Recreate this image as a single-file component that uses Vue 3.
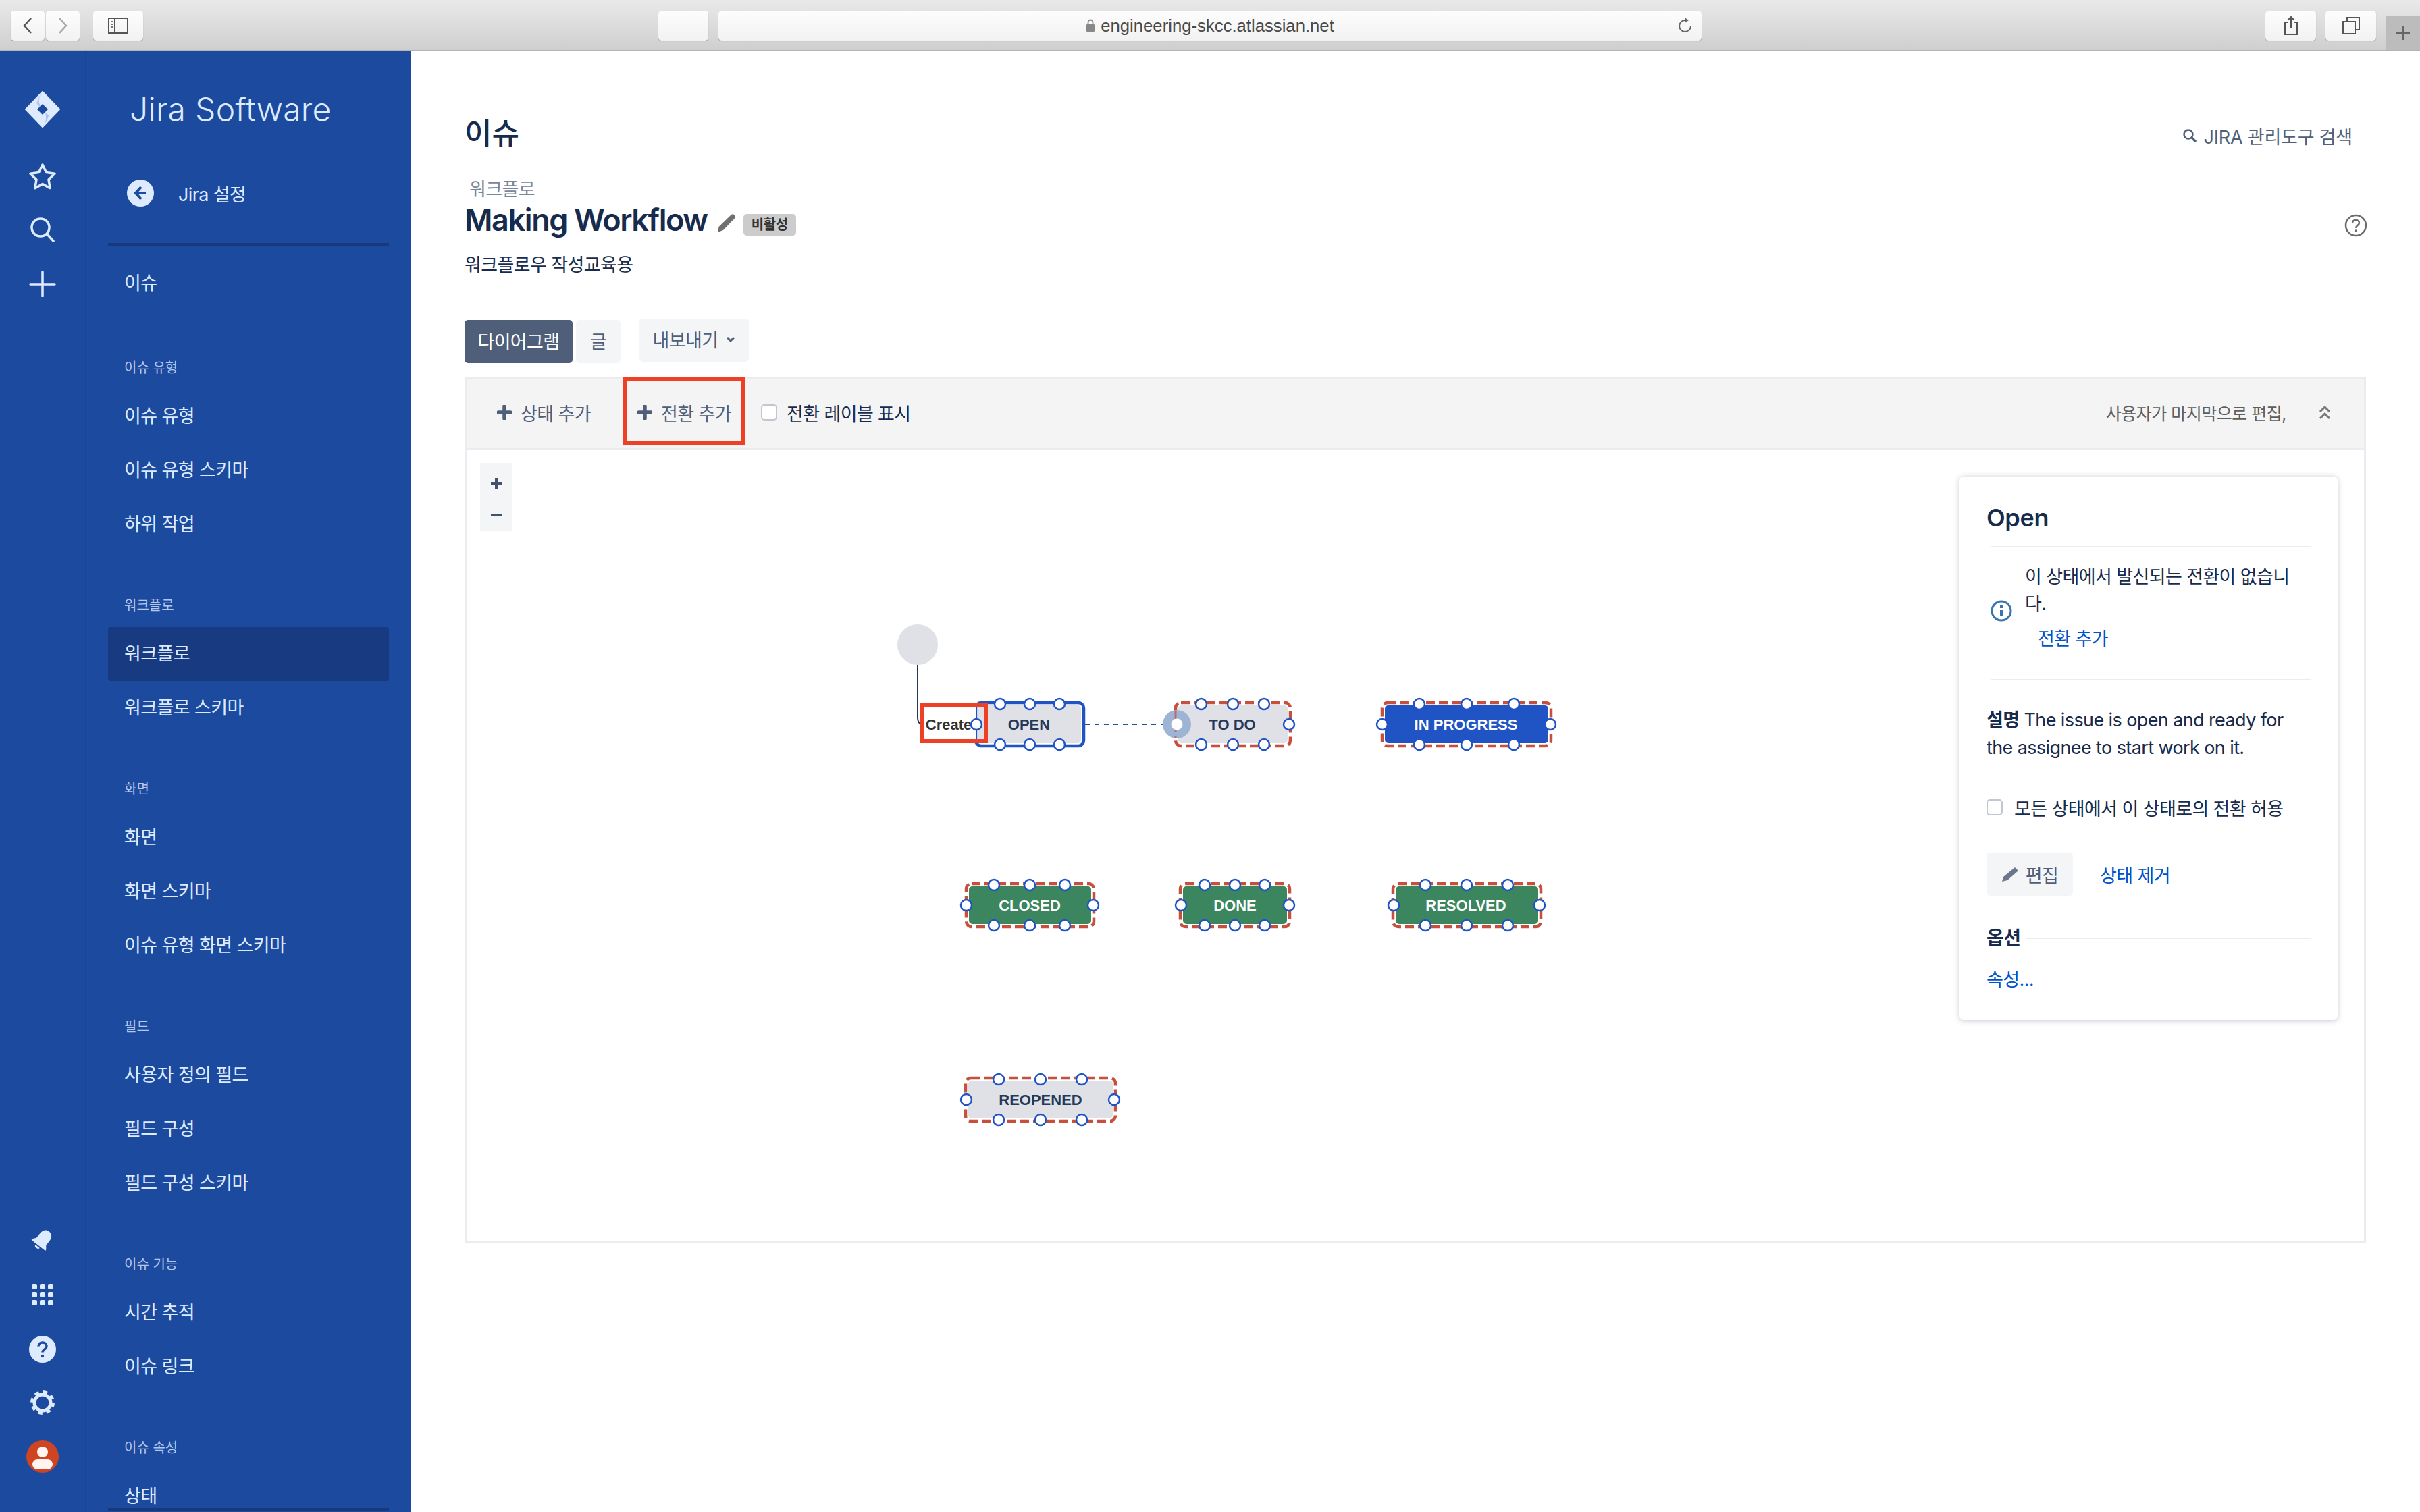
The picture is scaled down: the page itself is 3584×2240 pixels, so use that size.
<script setup>
const groups = [
  { title: '이슈 유형', items: ['이슈 유형', '이슈 유형 스키마', '하위 작업'] },
  { title: '워크플로', items: ['워크플로', '워크플로 스키마'], active: '워크플로' },
  { title: '화면', items: ['화면', '화면 스키마', '이슈 유형 화면 스키마'] },
  { title: '필드', items: ['사용자 정의 필드', '필드 구성', '필드 구성 스키마'] },
  { title: '이슈 기능', items: ['시간 추적', '이슈 링크'] },
  { title: '이슈 속성', items: ['상태'] }
]

const nodes = [
  { label: 'OPEN', x1: 1443, x2: 1607, cy: 1073, fill: '#dfe1e6', ink: '#253858', selected: true, tops: [1481, 1525, 1569], left: 1446, right: null, tx: 1524 },
  { label: 'TO DO', x1: 1739, x2: 1913, cy: 1073, fill: '#dfe1e6', ink: '#253858', tops: [1779, 1826, 1872], left: null, right: 1909, tx: 1825 },
  { label: 'IN PROGRESS', x1: 2045, x2: 2299, cy: 1073, fill: '#2054c4', ink: '#ffffff', tops: [2102, 2172, 2242], left: 2047, right: 2296, tx: 2171 },
  { label: 'CLOSED', x1: 1429, x2: 1622, cy: 1341, fill: '#3c865f', ink: '#ffffff', tops: [1472, 1525, 1577], left: 1431, right: 1619, tx: 1525 },
  { label: 'DONE', x1: 1746, x2: 1912, cy: 1341, fill: '#3c865f', ink: '#ffffff', tops: [1784, 1829, 1873], left: 1749, right: 1909, tx: 1829 },
  { label: 'RESOLVED', x1: 2061, x2: 2284, cy: 1341, fill: '#3c865f', ink: '#ffffff', tops: [2111, 2172, 2233], left: 2064, right: 2280, tx: 2171 },
  { label: 'REOPENED', x1: 1428, x2: 1654, cy: 1629, fill: '#dfe1e6', ink: '#253858', tops: [1479, 1541, 1602], left: 1431, right: 1650, tx: 1541 }
]
</script>

<template>
  <div class="app">
    <header class="browser">
      <div class="btn-pair">
        <button class="chrome-btn nav"><svg width="16" height="28" viewBox="0 0 16 28"><path d="M13 3 3 14l10 11" fill="none" stroke="#555" stroke-width="2.5"/></svg></button>
        <button class="chrome-btn nav"><svg width="16" height="28" viewBox="0 0 16 28"><path d="M3 3l10 11L3 25" fill="none" stroke="#a8a8a8" stroke-width="2.5"/></svg></button>
      </div>
      <button class="chrome-btn side-btn">
        <svg width="30" height="24" viewBox="0 0 30 24"><rect x="1" y="1" width="28" height="22" fill="none" stroke="#555" stroke-width="2"/><path d="M10 1v22" stroke="#555" stroke-width="2"/><path d="M4 6h3M4 10h3M4 14h3" stroke="#777" stroke-width="2"/></svg>
      </button>
      <div class="chrome-btn blank"></div>
      <div class="address">
        <svg class="lock" width="14" height="20" viewBox="0 0 14 20"><rect x="1" y="8" width="12" height="11" rx="1" fill="#888"/><path d="M3.500 8V5a3.500 3.500 0 0 1 7 0v3" fill="none" stroke="#888" stroke-width="1.800"/></svg>
        <span>engineering-skcc.atlassian.net</span>
        <svg class="reload" width="24" height="26" viewBox="0 0 24 26"><path d="M20 14a8.500 8.500 0 1 1-8-9" fill="none" stroke="#666" stroke-width="2"/><path d="M11 1l6 4-6 4z" fill="#666"/></svg>
      </div>
      <button class="chrome-btn tool"><svg width="24" height="30" viewBox="0 0 24 30"><path d="M7 10H3v18h18V10h-4M12 19V2M7 7l5-5 5 5" fill="none" stroke="#555" stroke-width="2"/></svg></button>
      <button class="chrome-btn tool tabs"><svg width="26" height="26" viewBox="0 0 26 26"><rect x="1" y="7" width="18" height="18" fill="none" stroke="#555" stroke-width="2"/><path d="M7 7V1h18v18h-6" fill="none" stroke="#555" stroke-width="2"/></svg></button>
      <div class="newtab"><svg width="24" height="24" viewBox="0 0 24 24"><path d="M12 2v20M2 12h20" stroke="#666" stroke-width="2"/></svg></div>
    </header>

    <div class="body">
      <nav class="rail">
        <div class="rail-group">
          <svg class="logo" width="54" height="54" viewBox="0 0 54 54">
            <defs>
              <linearGradient id="lg1" x1="0" y1="0" x2="1" y2="1"><stop offset="0" stop-color="#deebff"/><stop offset="1" stop-color="#7f9fdc"/></linearGradient>
            </defs>
            <path d="M27 1 52 27 27 53 2 27Z" fill="#deebff" stroke="#deebff" stroke-width="2" stroke-linejoin="round"/>
            <path d="M27 1C20 9 20 20 27 27L18 18C20 10 24 5 27 1Z" fill="url(#lg1)"/>
            <path d="M27 53C34 45 34 34 27 27L36 36C34 44 30 49 27 53Z" fill="url(#lg1)"/>
            <path d="M27 19 35 27 27 35 19 27Z" fill="#1c4a9f"/>
          </svg>
          <svg class="ri star" width="42" height="40" viewBox="0 0 42 40"><path d="M21 3l5.500 11.500 12.500 1.800-9 8.800 2.100 12.500L21 31.600 9.900 37.600 12 25.100l-9-8.800 12.500-1.800z" fill="none" stroke="#deebff" stroke-width="3.500" stroke-linejoin="round"/></svg>
          <svg class="ri search" width="40" height="38" viewBox="0 0 40 38"><circle cx="17" cy="16" r="13" fill="none" stroke="#deebff" stroke-width="3.500"/><path d="M27 26l9 10" stroke="#deebff" stroke-width="3.500" stroke-linecap="round"/></svg>
          <svg class="ri plus" width="40" height="38" viewBox="0 0 40 38"><path d="M20 1v36M2 19h36" stroke="#deebff" stroke-width="3.500" stroke-linecap="round"/></svg>
        </div>
        <div class="rail-group bottom">
          <svg class="ri bell" width="36" height="36" viewBox="0 0 36 36"><g transform="rotate(38 18 18)"><path d="M18 2c-6 0-9 5-9 11v8l-4 5v2h26v-2l-4-5v-8c0-6-3-11-9-11z" fill="#deebff"/><path d="M14 30h8a4 3 0 0 1-8 0z" fill="#deebff"/></g></svg>
          <svg class="ri grid" width="34" height="34" viewBox="0 0 34 34"><g fill="#deebff"><rect x="1" y="1" width="8" height="8" rx="2"/><rect x="13" y="1" width="8" height="8" rx="2"/><rect x="25" y="1" width="8" height="8" rx="2"/><rect x="1" y="13" width="8" height="8" rx="2"/><rect x="13" y="13" width="8" height="8" rx="2"/><rect x="25" y="13" width="8" height="8" rx="2"/><rect x="1" y="25" width="8" height="8" rx="2"/><rect x="13" y="25" width="8" height="8" rx="2"/><rect x="25" y="25" width="8" height="8" rx="2"/></g></svg>
          <svg class="ri help" width="40" height="40" viewBox="0 0 40 40"><circle cx="20" cy="20" r="20" fill="#deebff"/><path d="M14 15.500c0-3.500 2.800-5.500 6-5.500s6 2 6 5.200c0 4.800-6 4.800-6 9.300" fill="none" stroke="#1c4a9f" stroke-width="3.500"/><circle cx="20" cy="30" r="2.200" fill="#1c4a9f"/></svg>
          <svg class="ri gear" width="38" height="38" viewBox="0 0 38 38"><circle cx="19" cy="19" r="12" fill="none" stroke="#deebff" stroke-width="5"/><circle cx="19" cy="19" r="15.500" fill="none" stroke="#deebff" stroke-width="5" stroke-dasharray="6.200 6"/></svg>
          <svg class="ri avatar" width="48" height="48" viewBox="0 0 48 48"><circle cx="24" cy="24" r="24" fill="#cf4521"/><circle cx="24" cy="17" r="8" fill="#fff4f0"/><rect x="9" y="28" width="30" height="15" rx="7.500" fill="#fff4f0"/></svg>
        </div>
      </nav>

      <aside class="side">
        <div class="brand">Jira Software</div>
        <div class="back">
          <svg width="40" height="40" viewBox="0 0 40 40"><circle cx="20" cy="20" r="20" fill="#deebff"/><path d="M21 11l-8 9 8 9M14 20h14" fill="none" stroke="#1c4a9f" stroke-width="4"/></svg>
          <span>Jira 설정</span>
        </div>
        <div class="side-rule"></div>
        <div class="side-item first">이슈</div>
        <section v-for="g in groups" :key="g.title" class="side-group">
          <h4>{{ g.title }}</h4>
          <div v-for="i in g.items" :key="i" class="side-item" :class="{ on: i === g.active }">{{ i }}</div>
        </section>
        <div class="side-end"></div>
      </aside>

      <main class="main">
        <div class="top-row">
          <h1>이슈</h1>
          <div class="admin-search">
            <svg width="22" height="22" viewBox="0 0 22 22"><circle cx="9" cy="9" r="6.500" fill="none" stroke="#505f79" stroke-width="2.500"/><path d="M14 14l6 6" stroke="#505f79" stroke-width="3.500"/></svg>
            <span>JIRA 관리도구 검색</span>
          </div>
        </div>
        <div class="crumb">워크플로</div>
        <div class="title-row">
          <h2>Making Workflow</h2>
          <svg class="pencil" width="28" height="28" viewBox="0 0 28 28"><path d="M21 2c2-1.500 4-.5 5 1s1.200 3 0 4.500L9 25l-8 3 1.500-8z" fill="#707070"/></svg>
          <span class="badge">비활성</span>
          <svg class="help-out" width="34" height="34" viewBox="0 0 34 34"><circle cx="17" cy="17" r="15" fill="none" stroke="#6b6b6b" stroke-width="2.500"/><path d="M12 13.500c0-3 2.200-4.500 5-4.500s5 1.600 5 4.200c0 3.800-5 3.800-5 7.500" fill="none" stroke="#6b6b6b" stroke-width="2.500"/><circle cx="17" cy="25" r="1.800" fill="#6b6b6b"/></svg>
        </div>
        <p class="desc">워크플로우 작성교육용</p>

        <div class="tabs-row">
          <button class="tb dark">다이어그램</button>
          <button class="tb text-tab">글</button>
          <button class="tb export">
            내보내기
            <svg width="14" height="10" viewBox="0 0 14 10"><path d="M2 2l5 5 5-5" fill="none" stroke="#505f79" stroke-width="3"/></svg>
          </button>
        </div>

        <section class="diagram">
          <div class="toolbar">
            <div class="tool-item">
              <svg width="22" height="22" viewBox="0 0 22 22"><path d="M11 2v18M2 11h18" stroke="#505f79" stroke-width="5.500" stroke-linecap="round"/></svg>
              <span>상태 추가</span>
            </div>
            <div class="tool-item second">
              <svg width="22" height="22" viewBox="0 0 22 22"><path d="M11 2v18M2 11h18" stroke="#505f79" stroke-width="5.500" stroke-linecap="round"/></svg>
              <span>전환 추가</span>
            </div>
            <label class="tool-check">
              <span class="check"></span>
              <span>전환 레이블 표시</span>
            </label>
            <div class="tool-right">
              <span>사용자가 마지막으로 편집,</span>
              <svg width="18" height="24" viewBox="0 0 18 24"><path d="M2 11l7-7 7 7M2 21l7-7 7 7" fill="none" stroke="#777" stroke-width="3"/></svg>
            </div>
            <div class="red-box"></div>
          </div>

          <div class="canvas">
            <svg class="graph" width="2810" height="1171" viewBox="0 0 2810 1171">
              <g transform="translate(-691 -666)">
                <circle cx="1359" cy="955" r="30" fill="#dfe1e6"/>
                <path d="M1359 985v78q0 6 4 10" fill="none" stroke="#253858" stroke-width="2"/>
                <path d="M1607 1073H1736" stroke="#2a4f9f" stroke-width="2" stroke-dasharray="7 7"/>

                <g v-for="n in nodes" :key="n.label">
                  <rect :x="n.x1 + 2" :y="n.cy - 32" :width="n.x2 - n.x1 - 4" height="64" rx="8" fill="#fff"
                    :stroke="n.selected ? '#2054c4' : '#c64f3e'" stroke-width="4.500"
                    :stroke-dasharray="n.selected ? 'none' : '13 6'"/>
                  <rect :x="n.x1 + 6" :y="n.cy - 28" :width="n.x2 - n.x1 - 12" height="56" rx="5" :fill="n.fill"/>
                  <text :x="n.tx" :y="n.cy + 8" class="node-text" :fill="n.ink">{{ n.label }}</text>
                </g>

                <circle cx="1743" cy="1073" r="21" fill="#9db4d5"/>
                <path d="M1741 1053v40" stroke="#c64f3e" stroke-width="3" stroke-dasharray="13 6" opacity=".7"/>

                <rect x="1362" y="1041" width="84" height="60" fill="#fff"/>
                <text x="1405" y="1081" class="create-text">Create</text>
                <rect x="1365" y="1044" width="95" height="54" fill="none" stroke="#ee4024" stroke-width="6"/>

                <g v-for="n in nodes" :key="n.label + 'h'" class="handles">
                  <template v-for="x in n.tops" :key="x">
                    <circle :cx="x" :cy="n.cy - 30" r="8"/>
                    <circle :cx="x" :cy="n.cy + 30" r="8"/>
                  </template>
                  <circle v-if="n.left" :cx="n.left" :cy="n.cy" r="8"/>
                  <circle v-if="n.right" :cx="n.right" :cy="n.cy" r="8"/>
                </g>
                <circle class="handle-plain" cx="1743" cy="1073" r="8.500"/>
              </g>
            </svg>

            <div class="zoomer">
              <svg width="20" height="20" viewBox="0 0 20 20"><path d="M10 2v16M2 10h16" stroke="#42526e" stroke-width="4"/></svg>
              <svg width="20" height="20" viewBox="0 0 20 20"><path d="M2 10h16" stroke="#42526e" stroke-width="4"/></svg>
            </div>

            <aside class="info">
              <h3>Open</h3>
              <div class="rule"></div>
              <div class="notice">
                <svg width="32" height="32" viewBox="0 0 32 32"><circle cx="16" cy="16" r="14" fill="none" stroke="#3b73af" stroke-width="3"/><rect x="14" y="14" width="4" height="10" fill="#3b73af"/><rect x="14" y="8" width="4" height="4" fill="#3b73af"/></svg>
                <div>
                  <p>이 상태에서 발신되는 전환이 없습니다.</p>
                  <a class="add-link">전환 추가</a>
                </div>
              </div>
              <div class="rule second"></div>
              <p class="about"><b>설명</b> The issue is open and ready for the assignee to start work on it.</p>
              <label class="all-check"><span class="check"></span><span>모든 상태에서 이 상태로의 전환 허용</span></label>
              <div class="actions">
                <button class="edit">
                  <svg width="26" height="24" viewBox="0 0 26 24"><path d="M20 2l5 5L9 21l-8 2 2-7z" fill="#6b778c"/></svg>
                  <span>편집</span>
                </button>
                <a>상태 제거</a>
              </div>
              <div class="options"><b>옵션</b><i></i></div>
              <a class="props">속성...</a>
            </aside>
          </div>
        </section>
      </main>
    </div>
  </div>
</template>

<style>
html, body { margin: 0; background: #fff; }
</style>

<style scoped>
.app {
  width: 3584px; height: 2240px; overflow: hidden; display: flex; flex-direction: column;
  font-family: Inter, "Noto Sans CJK KR", sans-serif; font-size: 27px; color: #172b4d;
  letter-spacing: -0.6px;
}
button { font: inherit; letter-spacing: inherit; border: 0; padding: 0; }
h1, h2, h3, h4, p { margin: 0; }

.browser {
  height: 76px; box-sizing: border-box; flex: none; position: relative; display: flex; align-items: flex-start;
  padding: 16px 0 0 16px; background: linear-gradient(#e9e9e9, #cfcfcf); border-bottom: 2px solid #b4b4b4;
}
.chrome-btn {
  height: 44px; background: linear-gradient(#fdfdfd, #f2f2f2); border-radius: 5px;
  box-shadow: 0 1px 1px rgba(0,0,0,.3); display: flex; align-items: center; justify-content: center;
}
.btn-pair { display: flex; gap: 2px; }
.nav { width: 50px; }
.side-btn { width: 74px; margin-left: 20px; }
.blank { width: 74px; margin-left: 763px; }
.address {
  width: 1456px; height: 44px; margin-left: 15px; position: relative; display: flex; align-items: center; justify-content: center; gap: 8px;
  background: linear-gradient(#fdfdfd, #f2f2f2); border-radius: 5px; box-shadow: 0 1px 1px rgba(0,0,0,.3);
  font: 25.7px "Liberation Sans", sans-serif; color: #4a4a4a; letter-spacing: 0;
}
.reload { position: absolute; right: 12px; top: 9px; }
.tool { width: 75px; margin-left: 14px; }
.address + .tool { margin-left: 835px; }
.newtab {
  position: absolute; right: 0; top: 24px; width: 51px; height: 50px; background: #bcbcbc;
  display: flex; align-items: center; justify-content: center;
}

.body { flex: 1; display: flex; min-height: 0; }

.rail {
  width: 128px; box-sizing: border-box; flex: none; background: #1c4a9f; border-right: 2px solid #1a4594;
  display: flex; flex-direction: column; justify-content: space-between; align-items: center;
  padding: 59px 0 58px;
}
.rail-group { display: flex; flex-direction: column; align-items: center; }
.star { margin-top: 52px; }
.search { margin-top: 40px; }
.plus { margin-top: 43px; }
.bottom .grid { margin-top: 46px; }
.bottom .help { margin-top: 44px; }
.bottom .gear { margin-top: 40px; }
.bottom .avatar { margin-top: 37px; }

.side {
  width: 480px; flex: none; box-sizing: border-box; background: #1c4a9f; color: #deebff; padding: 56px 32px 0; overflow: hidden; position: relative;
}
.brand { margin-left: 32px; font-family: Inter, sans-serif; font-size: 48px; line-height: 60px; letter-spacing: .3px; font-weight: 300; color: #deebff; white-space: nowrap; }
.back { display: flex; align-items: center; height: 64px; margin: 62px 0 0 28px; gap: 36px; }
.side-rule { height: 4px; background: #17387c; margin-top: 42px; }
.side-item { height: 80px; line-height: 80px; padding-left: 24px; border-radius: 4px; white-space: nowrap; }
.side-item.first { margin-top: 16px; }
.side-item.on { background: #173a80; }
.side-group { margin-top: 60px; }
.side-item.first + .side-group { margin-top: 65px; }
.side-group h4 { height: 40px; line-height: 40px; margin: 0 0 12px; padding-left: 24px; font-size: 20px; letter-spacing: 0; font-weight: 400; color: #b3c8ec; }
.side-end { position: absolute; left: 32px; right: 32px; top: 2158px; height: 4px; background: #17387c; }

.main { flex: 1; min-width: 0; box-sizing: border-box; padding: 94px 80px 0 80px; }
.top-row { display: flex; justify-content: space-between; align-items: center; height: 56px; }
h1 { font-size: 44px; line-height: 56px; font-weight: 500; letter-spacing: 0; }
.admin-search { display: flex; align-items: center; gap: 10px; margin-right: 20px; color: #505f79; margin-top: 6px; letter-spacing: -.2px; }
.crumb { margin: 39px 0 0 7px; line-height: 32px; color: #7a869a; }
.title-row { display: flex; align-items: center; height: 60px; margin-top: -1px; position: relative; }
h2 { font-size: 45px; line-height: 60px; font-weight: 600; letter-spacing: -1.4px; white-space: nowrap; }
.pencil { margin: 8px 0 0 14px; }
.badge { margin: 14px 0 0 11px; width: 78px; height: 32px; box-sizing: border-box; text-align: center; background: #ccc; border-radius: 5px; font-size: 20px; line-height: 32px; font-weight: 700; color: #333; letter-spacing: -.4px; }
.help-out { margin: 15px -2px 0 auto; }
.desc { margin-top: 17px; line-height: 40px; }

.tabs-row { display: flex; align-items: flex-start; margin-top: 59px; }
.tb { height: 64px; background: #f4f5f7; color: #505f79; border-radius: 5px; padding-bottom: 3px; }
.dark { width: 160px; background: #505f79; color: #fff; margin-top: 2px; }
.text-tab { width: 66px; margin: 2px 0 0 5px; }
.export { width: 162px; margin-left: 28px; display: flex; align-items: center; justify-content: center; gap: 12px; }

.diagram { margin-top: 21px; height: 1283px; box-sizing: border-box; border: 3px solid #ebecf0; display: flex; flex-direction: column; }
.toolbar { height: 104px; flex: none; box-sizing: border-box; background: #f4f4f5; border-bottom: 3px solid #ebecf0; display: flex; align-items: center; padding: 0 0 3px 45px; position: relative; color: #505f79; }
.tool-item { display: flex; align-items: center; gap: 13px; }
.tool-item.second { margin-left: 69px; }
.tool-check { display: flex; align-items: center; gap: 14px; margin-left: 44px; color: #172b4d; }
.check { width: 24px; height: 24px; box-sizing: border-box; display: block; background: #fff; border: 2px solid #c1c7d0; border-radius: 5px; }
.tool-right { margin-left: auto; margin-right: 49px; display: flex; align-items: center; gap: 48px; color: #5e5e5e; font-size: 25px; letter-spacing: -.5px; }
.red-box { position: absolute; left: 232px; top: -3px; width: 180px; height: 101px; box-sizing: border-box; border: 6px solid #ee4024; }

.canvas { flex: 1; position: relative; overflow: hidden; }
.graph { position: absolute; left: 0; top: 0; }
.node-text { font: 700 22px "Liberation Sans", sans-serif; text-anchor: middle; letter-spacing: 0; }
.create-text { font: 700 22px "Liberation Sans", sans-serif; text-anchor: middle; fill: #333; letter-spacing: 0; }
.handles circle, .handle-plain { fill: #fff; stroke: #2054c4; stroke-width: 2.500; }
.handle-plain { stroke: none; }

.zoomer { position: absolute; left: 20px; top: 20px; width: 48px; height: 100px; background: #f4f5f7; display: flex; flex-direction: column; align-items: center; justify-content: space-around; padding: 6px 0 0; box-sizing: border-box; }

.info { position: absolute; right: 39px; top: 40px; width: 560px; height: 805px; box-sizing: border-box; padding: 39px 40px 0; background: #fff; border-radius: 6px; box-shadow: 0 1px 8px rgba(9,30,66,.25); }
h3 { font-size: 36px; line-height: 44px; font-weight: 600; letter-spacing: -.3px; }
.rule { height: 2px; background: #ebecf0; margin: 20px 0 0 6px; }
.notice { display: flex; gap: 19px; margin: 24px 0 0 6px; }
.notice svg { margin-top: 54px; flex: none; }
.notice p { line-height: 40px; width: 405px; }
.add-link { display: block; line-height: 39px; margin: 12px 0 0 19px; color: #0052cc; }
.rule.second { margin-top: 40px; }
.about { margin-top: 38px; line-height: 41px; }
.about b { font-weight: 700; }
.all-check { display: flex; align-items: center; gap: 17px; height: 40px; margin-top: 48px; }
.actions { display: flex; align-items: center; margin-top: 47px; gap: 40px; }
.actions a { color: #0052cc; }
.edit { display: flex; align-items: center; justify-content: center; gap: 10px; width: 128px; height: 64px; background: #f4f5f7; border-radius: 5px; color: #505f79; }
.options { display: flex; align-items: center; gap: 8px; height: 40px; margin-top: 41px; }
.options b { font-weight: 700; font-size: 28px; }
.options i { flex: 1; height: 2px; background: #ebecf0; margin-top: 4px; }
.props { display: block; line-height: 40px; margin-top: 24px; color: #0052cc; }
</style>
